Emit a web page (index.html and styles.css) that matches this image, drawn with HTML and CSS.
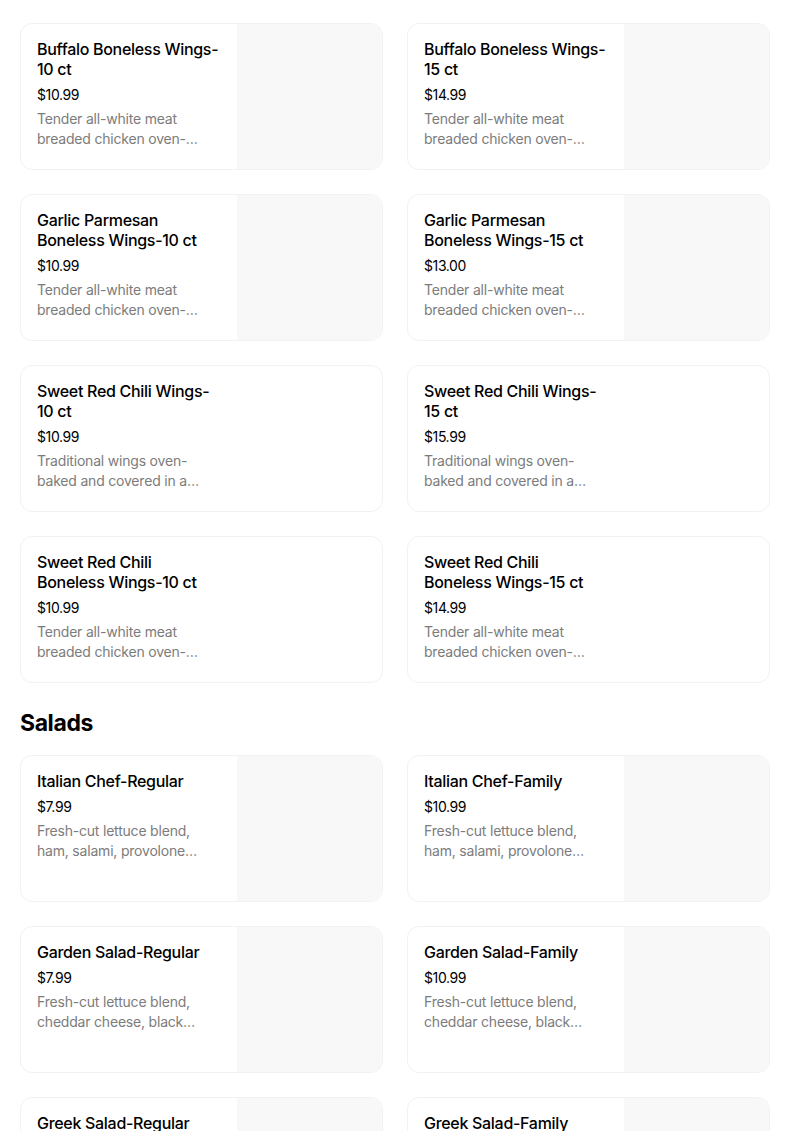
FILE: index.html
```html
<!DOCTYPE html>
<html>
<head>
  <title>Menu</title>
  <meta name="viewport" content="width=device-width,initial-scale=1">
  <link rel="stylesheet" href="styles.css">
</head>
<body>
  <div class="menu">
    <div class="grid">
      <div class="item">
        <div class="item_text">
          <div class="item_name">Buffalo Boneless Wings-10 ct</div>
          <div class="item_price">$10.99</div>
          <div class="item_desc">Tender all-white meat breaded chicken oven-baked and tossed in buffalo sauce</div>
        </div>
        <div class="item_pic"></div>
      </div>
      <div class="item">
        <div class="item_text">
          <div class="item_name">Buffalo Boneless Wings-15 ct</div>
          <div class="item_price">$14.99</div>
          <div class="item_desc">Tender all-white meat breaded chicken oven-baked and tossed in buffalo sauce</div>
        </div>
        <div class="item_pic"></div>
      </div>
      <div class="item">
        <div class="item_text">
          <div class="item_name">Garlic Parmesan Boneless Wings-10 ct</div>
          <div class="item_price">$10.99</div>
          <div class="item_desc">Tender all-white meat breaded chicken oven-baked and tossed in garlic parmesan</div>
        </div>
        <div class="item_pic"></div>
      </div>
      <div class="item">
        <div class="item_text">
          <div class="item_name">Garlic Parmesan Boneless Wings-15 ct</div>
          <div class="item_price">$13.00</div>
          <div class="item_desc">Tender all-white meat breaded chicken oven-baked and tossed in garlic parmesan</div>
        </div>
        <div class="item_pic"></div>
      </div>
      <div class="item">
        <div class="item_text">
          <div class="item_name">Sweet Red Chili Wings-10 ct</div>
          <div class="item_price">$10.99</div>
          <div class="item_desc">Traditional wings oven-baked and covered in a sweet red chili sauce</div>
        </div>
        <div class="item_pic item_pic--none"></div>
      </div>
      <div class="item">
        <div class="item_text">
          <div class="item_name">Sweet Red Chili Wings-15 ct</div>
          <div class="item_price">$15.99</div>
          <div class="item_desc">Traditional wings oven-baked and covered in a sweet red chili sauce</div>
        </div>
        <div class="item_pic item_pic--none"></div>
      </div>
      <div class="item">
        <div class="item_text">
          <div class="item_name">Sweet Red Chili Boneless Wings-10 ct</div>
          <div class="item_price">$10.99</div>
          <div class="item_desc">Tender all-white meat breaded chicken oven-baked and tossed in sweet red chili</div>
        </div>
        <div class="item_pic item_pic--none"></div>
      </div>
      <div class="item">
        <div class="item_text">
          <div class="item_name">Sweet Red Chili Boneless Wings-15 ct</div>
          <div class="item_price">$14.99</div>
          <div class="item_desc">Tender all-white meat breaded chicken oven-baked and tossed in sweet red chili</div>
        </div>
        <div class="item_pic item_pic--none"></div>
      </div>
    </div>

    <h2 class="section-title">Salads</h2>
    <div class="grid">
      <div class="item">
        <div class="item_text">
          <div class="item_name">Italian Chef-Regular</div>
          <div class="item_price">$7.99</div>
          <div class="item_desc">Fresh-cut lettuce blend, ham, salami, provolone cheese, black olives and tomatoes</div>
        </div>
        <div class="item_pic"></div>
      </div>
      <div class="item">
        <div class="item_text">
          <div class="item_name">Italian Chef-Family</div>
          <div class="item_price">$10.99</div>
          <div class="item_desc">Fresh-cut lettuce blend, ham, salami, provolone cheese, black olives and tomatoes</div>
        </div>
        <div class="item_pic"></div>
      </div>
      <div class="item">
        <div class="item_text">
          <div class="item_name">Garden Salad-Regular</div>
          <div class="item_price">$7.99</div>
          <div class="item_desc">Fresh-cut lettuce blend, cheddar cheese, black olives, tomatoes and croutons</div>
        </div>
        <div class="item_pic"></div>
      </div>
      <div class="item">
        <div class="item_text">
          <div class="item_name">Garden Salad-Family</div>
          <div class="item_price">$10.99</div>
          <div class="item_desc">Fresh-cut lettuce blend, cheddar cheese, black olives, tomatoes and croutons</div>
        </div>
        <div class="item_pic"></div>
      </div>
      <div class="item">
        <div class="item_text">
          <div class="item_name">Greek Salad-Regular</div>
          <div class="item_price">$7.99</div>
          <div class="item_desc">Fresh-cut lettuce blend, feta cheese, black olives, tomatoes and red onions</div>
        </div>
        <div class="item_pic"></div>
      </div>
      <div class="item">
        <div class="item_text">
          <div class="item_name">Greek Salad-Family</div>
          <div class="item_price">$10.99</div>
          <div class="item_desc">Fresh-cut lettuce blend, feta cheese, black olives, tomatoes and red onions</div>
        </div>
        <div class="item_pic"></div>
      </div>
    </div>
  </div>
</body>
</html>
```

FILE: styles.css
```css
html,
body {
  margin: 0;
  background: #fff;
  font-family: Inter, 'Noto Sans', sans-serif;
  color: #000;
}

.menu {
  padding: 23px 34px 0 20px;
}

.grid {
  display: grid;
  grid-template-columns: 1fr 1fr;
  gap: 24px;
}

.section-title {
  margin: 24px 0 16px;
  font-size: 23px;
  line-height: 32px;
  font-weight: 700;
  letter-spacing: -0.4px;
}

.item {
  display: flex;
  height: 147px;
  box-sizing: border-box;
  border: 1px solid #f2f2f2;
  border-radius: 12px;
  overflow: hidden;
}

.item_text {
  flex: 1;
  min-width: 0;
  padding: 15px 17px 16px 16px;
}

.item_name {
  font-size: 16px;
  line-height: 20px;
  font-weight: 500;
  letter-spacing: -0.3px;
  color: #000;
}

.item_price {
  margin-top: 6px;
  font-size: 14px;
  line-height: 20px;
  letter-spacing: -0.4px;
}

.item_desc {
  margin-top: 4px;
  font-size: 14px;
  line-height: 20px;
  color: #7c7c7c;
  letter-spacing: -0.2px;
  display: -webkit-box;
  -webkit-line-clamp: 2;
  -webkit-box-orient: vertical;
  overflow: hidden;
}

.item_pic {
  width: 145px;
  flex: none;
  background: #f8f8f8;
}

.item_pic--none {
  background: transparent;
}
```
